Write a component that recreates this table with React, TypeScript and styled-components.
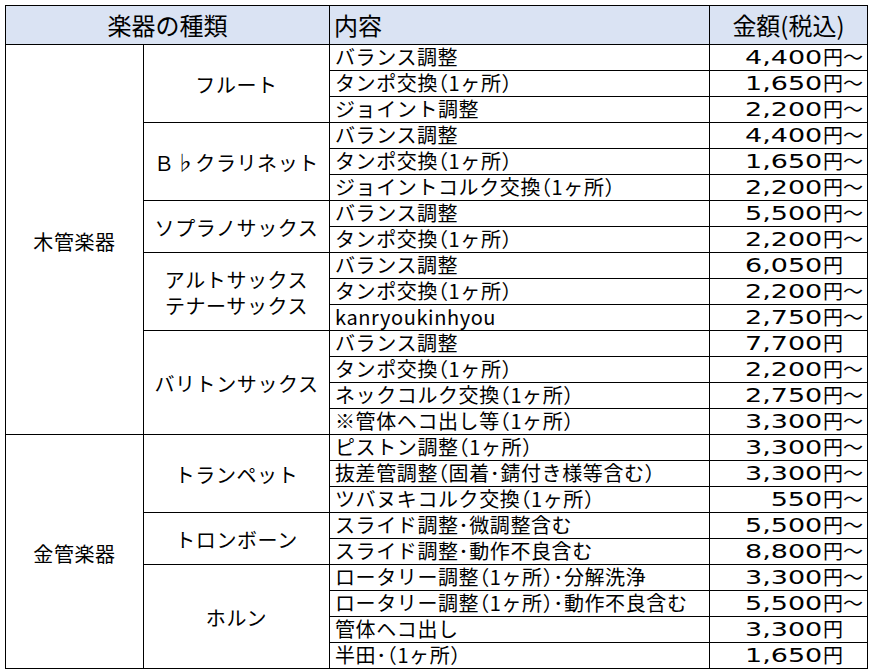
import React from "react";
import styled, { createGlobalStyle } from "styled-components";

const GlobalStyle = createGlobalStyle`
  html, body {
    margin: 0;
    padding: 0;
    background: #ffffff;
  }
  body {
    font-family: "Noto Sans CJK JP", "Noto Sans", sans-serif;
    color: #000;
  }
`;

type Item = { label: string; price: string; from: boolean };
type Instrument = { name: string[]; items: Item[] };
type Group = { name: string; instruments: Instrument[] };

const it = (label: string, price: string, from = true): Item => ({ label, price, from });

const groups: Group[] = [
  {
    name: "木管楽器",
    instruments: [
      {
        name: ["フルート"],
        items: [it("バランス調整", "4,400"), it("タンポ交換（1ヶ所）", "1,650"), it("ジョイント調整", "2,200")],
      },
      {
        name: ["Ｂ♭クラリネット"],
        items: [
          it("バランス調整", "4,400"),
          it("タンポ交換（1ヶ所）", "1,650"),
          it("ジョイントコルク交換（1ヶ所）", "2,200"),
        ],
      },
      {
        name: ["ソプラノサックス"],
        items: [it("バランス調整", "5,500"), it("タンポ交換（1ヶ所）", "2,200")],
      },
      {
        name: ["アルトサックス", "テナーサックス"],
        items: [it("バランス調整", "6,050", false), it("タンポ交換（1ヶ所）", "2,200"), it("kanryoukinhyou", "2,750")],
      },
      {
        name: ["バリトンサックス"],
        items: [
          it("バランス調整", "7,700", false),
          it("タンポ交換（1ヶ所）", "2,200"),
          it("ネックコルク交換（1ヶ所）", "2,750"),
          it("※管体ヘコ出し等（1ヶ所）", "3,300"),
        ],
      },
    ],
  },
  {
    name: "金管楽器",
    instruments: [
      {
        name: ["トランペット"],
        items: [
          it("ピストン調整（1ヶ所）", "3,300"),
          it("抜差管調整（固着･錆付き様等含む）", "3,300"),
          it("ツバヌキコルク交換（1ヶ所）", "550"),
        ],
      },
      {
        name: ["トロンボーン"],
        items: [it("スライド調整･微調整含む", "5,500"), it("スライド調整･動作不良含む", "8,800")],
      },
      {
        name: ["ホルン"],
        items: [
          it("ロータリー調整（1ヶ所）･分解洗浄", "3,300"),
          it("ロータリー調整（1ヶ所）･動作不良含む", "5,500"),
          it("管体ヘコ出し", "3,300", false),
          it("半田･（1ヶ所）", "1,650", false),
        ],
      },
    ],
  },
];

const Page = styled.div`
  padding: 5px 0 0 5px;
`;

const Grid = styled.div`
  display: grid;
  width: max-content;
  grid-template-columns: 137px 185px 379px 157px;
  grid-template-rows: 38px;
  grid-auto-rows: 25px;
  gap: 1px;
  padding: 1px;
  background: #000;
`;

const HeaderCell = styled.div<{ $col: string; $align: "center" | "flex-start" }>`
  grid-column: ${(p) => p.$col};
  grid-row: 1;
  background: #dae3f3;
  display: flex;
  align-items: center;
  justify-content: ${(p) => p.$align};
  padding: 0 4px;
  font-size: 24px;
  line-height: 28px;
  white-space: nowrap;
`;

const GroupCell = styled.div<{ $span: number }>`
  grid-column: 1;
  grid-row: span ${(p) => p.$span};
  background: #fff;
  display: flex;
  align-items: center;
  justify-content: center;
  font-size: 20px;
  letter-spacing: 0.6px;
  padding-top: 4px;
`;

const InstrumentCell = styled.div<{ $span: number }>`
  grid-column: 2;
  grid-row: span ${(p) => p.$span};
  background: #fff;
  display: flex;
  flex-direction: column;
  align-items: center;
  justify-content: center;
  font-size: 20px;
  line-height: 26px;
  letter-spacing: 0.6px;
  padding-top: 3px;
  white-space: nowrap;
`;

const ItemCell = styled.div`
  grid-column: 3;
  background: #fff;
  display: flex;
  align-items: flex-end;
  padding: 0 0 1px 5px;
  font-size: 20px;
  line-height: 24px;
  letter-spacing: 0.6px;
  font-feature-settings: "halt";
  white-space: nowrap;
`;

const PriceCell = styled.div`
  grid-column: 4;
  background: #fff;
  display: flex;
  align-items: flex-end;
  justify-content: flex-end;
  padding: 0 4px 1px 0;
  font-size: 20px;
  line-height: 24px;
  white-space: nowrap;
`;

const Amount = styled.span`
  display: inline-block;
  font-family: "DejaVu Sans", "Noto Sans", sans-serif;
  font-size: 20px;
  line-height: 24px;
  transform: scaleX(1.35);
  transform-origin: right bottom;
  margin-right: 1px;
`;

const Yen = styled.span`
  display: inline-block;
`;

const Tilde = styled.span<{ $shown: boolean }>`
  display: inline-block;
  visibility: ${(p) => (p.$shown ? "visible" : "hidden")};
`;

export default function App() {
  const cells: React.ReactNode[] = [];
  groups.forEach((g, gi) => {
    const groupRows = g.instruments.reduce((n, ins) => n + ins.items.length, 0);
    g.instruments.forEach((ins, ii) => {
      ins.items.forEach((item, ri) => {
        const key = `${gi}-${ii}-${ri}`;
        if (ii === 0 && ri === 0) {
          cells.push(
            <GroupCell key={`g-${key}`} $span={groupRows}>
              {g.name}
            </GroupCell>
          );
        }
        if (ri === 0) {
          cells.push(
            <InstrumentCell key={`i-${key}`} $span={ins.items.length}>
              {ins.name.map((line) => (
                <span key={line}>{line}</span>
              ))}
            </InstrumentCell>
          );
        }
        cells.push(<ItemCell key={`c-${key}`}>{item.label}</ItemCell>);
        cells.push(
          <PriceCell key={`p-${key}`}>
            <Amount>{item.price}</Amount>
            <Yen>円</Yen>
            <Tilde $shown={item.from}>～</Tilde>
          </PriceCell>
        );
      });
    });
  });

  return (
    <>
      <GlobalStyle />
      <Page>
        <Grid>
          <HeaderCell $col="1 / 3" $align="center">
            楽器の種類
          </HeaderCell>
          <HeaderCell $col="3" $align="flex-start">
            内容
          </HeaderCell>
          <HeaderCell $col="4" $align="center">
            金額(税込)
          </HeaderCell>
          {cells}
        </Grid>
      </Page>
    </>
  );
}
